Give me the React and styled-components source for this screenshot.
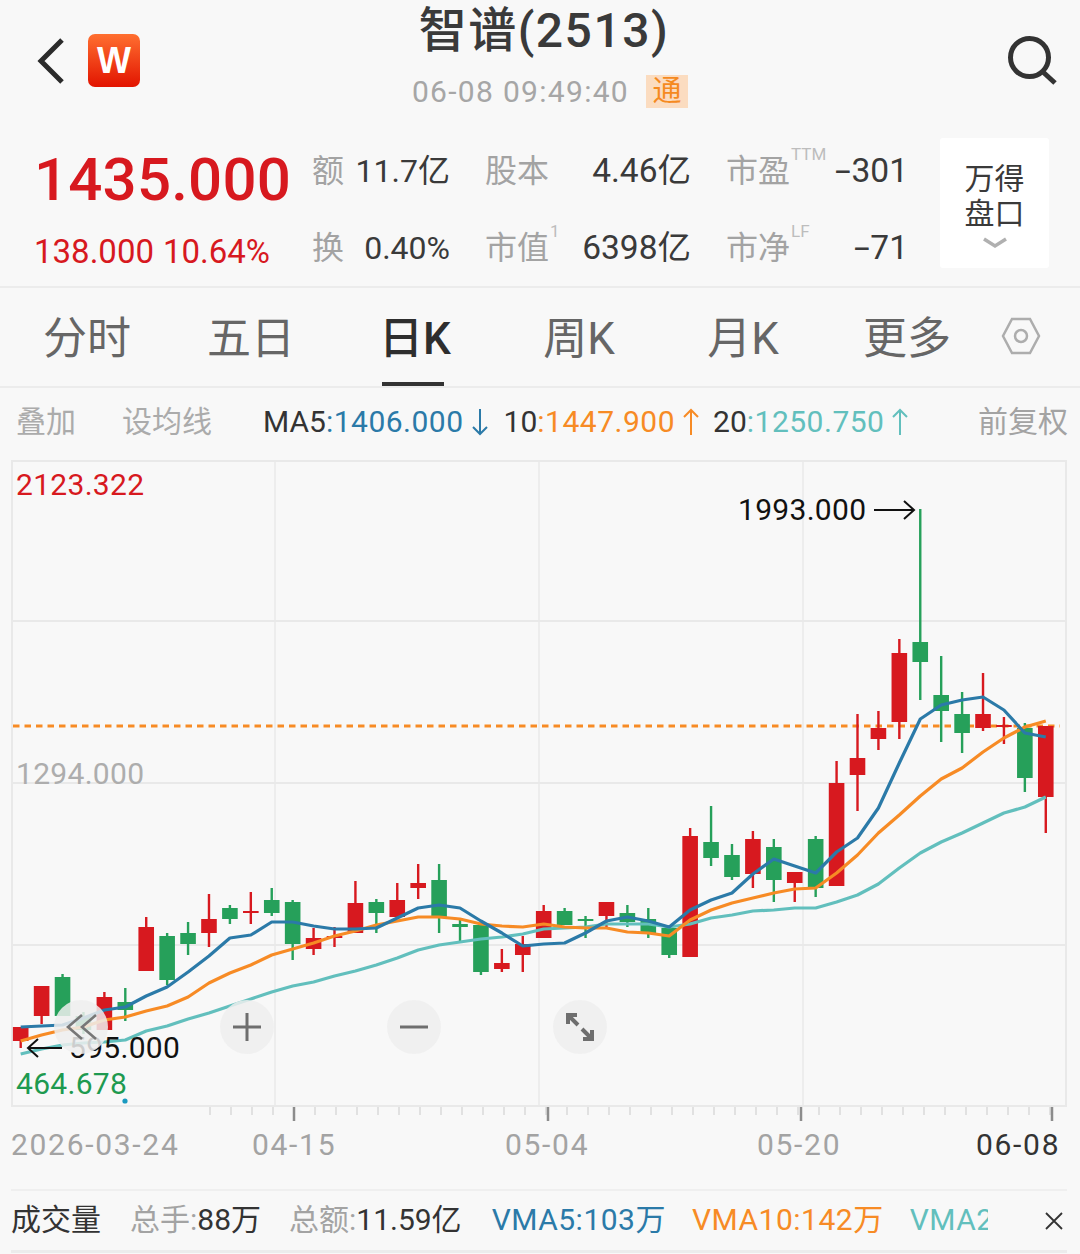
import React from "react";
import styled, { createGlobalStyle } from "styled-components";

const RED = "#d7191f";
const GREEN = "#26a05a";
const BLUE = "#2b7aa8";
const ORANGE = "#f78b25";
const TEAL = "#62bfbd";
const GRID = "#e9e9e9";

const FONT = `Roboto, "Noto Sans CJK SC", sans-serif`;

const GlobalStyle = createGlobalStyle`
  html, body {
    margin: 0;
    padding: 0;
    background: #f8f8f8;
  }
  body {
    font-family: ${FONT};
    overflow: hidden;
  }
`;

const Page = styled.div`
  width: 1080px;
  height: 1254px;
  overflow: hidden;
  background: #f8f8f8;
  color: #333;
`;

/* top bar */
const Header = styled.header`
  display: grid;
  grid-template-columns: 1fr auto 1fr;
  height: 138px;
`;

const HeaderLeft = styled.div`
  display: flex;
  align-items: flex-start;
  gap: 23px;
  padding: 34px 0 0 37px;
`;

const BackIcon = styled.svg`
  width: 28px;
  height: 53px;
`;

const Logo = styled.div`
  width: 52px;
  height: 53px;
  border-radius: 7px;
  background: linear-gradient(#ff6f30, #e21400);
  color: #fff;
  font: bold 36px/54px "Liberation Sans", sans-serif;
  text-align: center;
`;

const HeaderCenter = styled.div`
  display: flex;
  flex-direction: column;
  align-items: center;
  padding-left: 8px;
`;

const Title = styled.div`
  height: 60px;
  font-size: 48px;
  font-weight: 500;
  line-height: 61px;
  letter-spacing: 1.5px;
  color: #3a3a3a;
`;

const TimeRow = styled.div`
  display: flex;
  align-items: center;
  gap: 17px;
  height: 33px;
  margin-top: 15px;
  padding-left: 12px;
  font-size: 30px;
  letter-spacing: 1.3px;
  color: #a6a6a6;
`;

const Tag = styled.span`
  width: 42px;
  height: 33px;
  background: #fbdcc0;
  color: #f58a1f;
  font-size: 29px;
  line-height: 33px;
  letter-spacing: 0;
  text-align: center;
`;

const HeaderRight = styled.div`
  display: flex;
  justify-content: flex-end;
  padding: 34px 22px 0 0;
`;

const SearchIcon = styled.svg`
  width: 52px;
  height: 52px;
`;

/* quote block */
const QuoteRow = styled.section`
  display: flex;
  align-items: flex-start;
  height: 150px;
  box-sizing: border-box;
  padding-left: 35px;
  border-bottom: 2px solid #ececec;
`;

const PriceCol = styled.div`
  flex: 0 0 277px;
`;

const Price = styled.div`
  margin: 7px 0 0 -1px;
  font-size: 60px;
  font-weight: 500;
  line-height: 70px;
  letter-spacing: 0.2px;
  color: ${RED};
`;

const Change = styled.div`
  display: flex;
  gap: 9px;
  margin-top: 17px;
  margin-left: -1px;
  font-size: 33px;
  line-height: 40px;
  color: ${RED};
`;

const Stats = styled.div`
  display: grid;
  grid-template-columns: 138px 206px 182px;
  grid-auto-rows: 42px;
  column-gap: 35px;
  row-gap: 35px;
  padding-top: 12px;
`;

const Stat = styled.div`
  display: flex;
  justify-content: space-between;
  align-items: center;
  font-size: 32px;
  line-height: 42px;
  white-space: nowrap;
`;

const StatLabel = styled.span`
  display: flex;
  color: #a3a3a3;
`;

const Sup = styled.sup`
  margin: -4px 0 0 1px;
  font-size: 17px;
  line-height: 17px;
  color: #bdbdbd;
  vertical-align: top;
`;

const StatValue = styled.span`
  font-size: ${(p) => (p.$small ? 32 : 33.5)}px;
  color: #3a3a3a;
`;

const Dash = styled.span`
  display: inline-block;
  margin-right: 7px;
  transform: scaleX(1.7);
  transform-origin: left center;
`;

const DepthBox = styled.div`
  display: flex;
  flex-direction: column;
  align-items: center;
  width: 109px;
  height: 130px;
  margin-left: 32px;
  padding-top: 23px;
  box-sizing: border-box;
  background: #fff;
  border-radius: 3px;
  font-size: 30px;
  line-height: 35px;
  color: #3a3a3a;
  text-align: center;
`;

const DepthChevron = styled.svg`
  width: 26px;
  height: 12px;
  margin-top: 6px;
`;

/* period tabs */
const Tabs = styled.nav`
  display: flex;
  height: 100px;
  box-sizing: border-box;
  padding-left: 5px;
  border-bottom: 2px solid #ececec;
`;

const Tab = styled.div`
  display: flex;
  flex-direction: column;
  align-items: center;
  width: 164px;
`;

const TabText = styled.div`
  flex: 1;
  display: flex;
  align-items: center;
  font-size: 44px;
  font-weight: ${(p) => (p.$active ? 500 : 400)};
  color: ${(p) => (p.$active ? "#2e2e2e" : "#666")};
`;

const TabBar = styled.div`
  width: 62px;
  height: 4px;
  margin-right: 4px;
  background: ${(p) => (p.$active ? "#333" : "transparent")};
`;

const HexIcon = styled.svg`
  width: 40px;
  height: 38px;
  margin: 29px 0 0 12px;
`;

/* moving-average legend */
const MaRow = styled.div`
  display: flex;
  align-items: center;
  height: 72px;
  box-sizing: border-box;
  padding: 0 12px 5px 16px;
  font-size: 30px;
  white-space: nowrap;
`;

const MaTool = styled.span`
  margin-right: ${(p) => p.$gap}px;
  margin-bottom: 5px;
  color: #ababab;
`;

const MaKey = styled.span`
  color: #333;
`;

const MaValue = styled.span`
  letter-spacing: 0.5px;
  color: ${(p) => p.$color};
`;

const MaArrowIcon = styled.svg`
  width: 18px;
  height: 28px;
  margin: 0 ${(p) => p.$after}px 0 7px;
`;

const AdjustLabel = styled.span`
  margin-left: auto;
  margin-bottom: 5px;
  color: #a3a3a3;
`;

/* chart */
const ChartWrap = styled.div`
  position: relative;
  height: 662px;
`;

const ChartSvg = styled.svg`
  display: block;
  width: 1080px;
  height: 662px;
`;

const PriceTag = styled.span`
  position: absolute;
  left: ${(p) => p.$left}px;
  top: ${(p) => p.$top}px;
  font-size: 30px;
  line-height: 36px;
  letter-spacing: 0.3px;
  color: ${(p) => p.$color};
`;

const ZoomBar = styled.div`
  position: absolute;
  left: 54px;
  top: 540px;
  display: flex;
  gap: 112.4px;
`;

const ZoomButton = styled.div`
  display: flex;
  align-items: center;
  justify-content: center;
  width: 54px;
  height: 54px;
  border-radius: 50%;
  background: rgba(238, 238, 238, 0.85);
  svg {
    width: 34px;
    height: 34px;
  }
`;

/* date axis */
const DateAxis = styled.div`
  display: grid;
  grid-template-columns: 241px 253px 252px 219px auto;
  height: 46px;
  padding-left: 11px;
  font-size: 30px;
  line-height: 46px;
  letter-spacing: 1.7px;
  color: #a3a3a3;
`;

const DateCurrent = styled.span`
  color: #333;
`;

/* volume header */
const VolumeRow = styled.div`
  display: flex;
  align-items: baseline;
  height: 64px;
  box-sizing: border-box;
  margin: 21px 13px 0 11px;
  padding-top: 4px;
  border-top: 2px solid #efefef;
  border-bottom: 3px solid #ececec;
  font-size: 30px;
  white-space: nowrap;
`;

const VolumeTitle = styled.span`
  margin-right: 29px;
  color: #333;
`;

const VolumeStat = styled.span`
  margin-right: ${(p) => p.$gap}px;
  color: #333;
`;

const VolumeKey = styled.span`
  color: #a3a3a3;
`;

const VolumeMa = styled.span`
  margin-right: 26px;
  letter-spacing: 0.5px;
  color: ${(p) => p.$color};
`;

const VolumeClip = styled.span`
  width: 78px;
  overflow: hidden;
  letter-spacing: 0.5px;
  color: ${TEAL};
`;

const CloseIcon = styled.svg`
  align-self: center;
  width: 22px;
  height: 22px;
  margin: 0 2px 4px auto;
`;

// [up, wickTop, bodyTop, bodyBottom, wickBottom]
const CANDLES = [
  [1, 1027, 1027, 1041, 1048],
  [1, 986, 986, 1016, 1024],
  [0, 974, 977, 1016, 1016],
  [0, 1012, 1016, 1030, 1034],
  [1, 992, 997, 1030, 1030],
  [0, 988, 1002, 1010, 1021],
  [1, 917, 927, 971, 971],
  [0, 933, 936, 980, 985],
  [0, 922, 933, 944, 955],
  [1, 894, 919, 933, 947],
  [0, 905, 908, 919, 924],
  [1, 892, 911, 913, 924],
  [0, 888, 900, 913, 916],
  [0, 900, 902, 944, 960],
  [1, 928, 938, 949, 955],
  [1, 927, 936, 938, 947],
  [1, 881, 903, 933, 933],
  [0, 899, 902, 913, 933],
  [1, 883, 900, 917, 917],
  [1, 864, 883, 888, 899],
  [0, 864, 880, 918, 933],
  [0, 920, 924, 927, 943],
  [0, 925, 925, 972, 975],
  [1, 949, 963, 969, 972],
  [1, 936, 944, 955, 972],
  [1, 905, 911, 938, 938],
  [0, 908, 911, 925, 925],
  [0, 916, 919, 921, 938],
  [1, 902, 902, 916, 927],
  [0, 905, 913, 922, 927],
  [0, 908, 919, 933, 938],
  [0, 928, 928, 955, 958],
  [1, 828, 836, 957, 957],
  [0, 806, 842, 858, 866],
  [0, 844, 855, 877, 880],
  [1, 831, 839, 874, 888],
  [0, 839, 847, 880, 902],
  [1, 872, 872, 883, 902],
  [0, 836, 839, 888, 897],
  [1, 761, 783, 886, 886],
  [1, 714, 758, 775, 811],
  [1, 711, 728, 739, 750],
  [1, 639, 653, 722, 739],
  [0, 509, 642, 662, 700],
  [0, 656, 695, 711, 742],
  [0, 692, 714, 733, 753],
  [1, 673, 714, 728, 731],
  [1, 717, 725, 727, 744],
  [0, 723, 728, 778, 792],
  [1, 726, 726, 797, 833],
];

const MA5 = [1027, 1026, 1025, 1018, 1010, 1007, 996, 987, 972, 956, 938, 935, 922, 922, 926, 929, 929, 928, 918, 908, 905, 908, 921, 933, 946, 944, 943, 933, 921, 917, 921, 927, 910, 900, 893, 874, 859, 866, 873, 852, 838, 808, 763, 719, 705, 700, 697, 710, 733, 737];
const MA10 = [1041, 1035, 1030, 1027, 1020, 1017, 1011, 1006, 997, 983, 973, 965, 955, 949, 943, 936, 931, 925, 921, 917, 917, 919, 924, 926, 927, 924, 927, 928, 928, 932, 933, 936, 920, 910, 903, 898, 893, 889, 888, 873, 855, 833, 815, 796, 779, 768, 752, 738, 727, 721];
const MA20 = [1054, 1049, 1045, 1043, 1042, 1040, 1031, 1026, 1019, 1013, 1006, 999, 992, 986, 982, 976, 971, 965, 958, 950, 945, 942, 939, 937, 934, 929, 928, 927, 924, 924, 924, 927, 924, 918, 915, 911, 910, 908, 908, 902, 895, 884, 868, 853, 842, 833, 823, 813, 807, 797];

const candleX = (i) => 20.7 + i * 20.92;
const linePoints = (ys) => ys.map((y, i) => `${candleX(i).toFixed(1)},${y}`).join(" ");

const minorTicks = Array.from({ length: 41 }, (_, i) => 210 + i * 21);
const majorTicks = [294, 548, 801, 1052];

const Candle = ({ data, index }) => {
  const [up, wickTop, bodyTop, bodyBottom, wickBottom] = data;
  const x = candleX(index);
  const color = up ? RED : GREEN;
  return (
    <g fill={color}>
      <rect x={x - 1.2} y={wickTop} width={2.4} height={wickBottom - wickTop} />
      <rect x={x - 7.8} y={bodyTop} width={15.6} height={bodyBottom - bodyTop} />
    </g>
  );
};

const KChart = () => (
  <ChartSvg viewBox="0 460 1080 662">
    <g stroke={GRID} fill="none">
      <rect x="12" y="461" width="1054" height="645" strokeWidth="2" />
      <path d="M275 461V1106M539 461V1106M803 461V1106" strokeWidth="1.5" />
      <path d="M12 621H1066M12 783H1066M12 945H1066" strokeWidth="2" />
    </g>
    <path d="M13 726H1060" stroke={ORANGE} strokeWidth="2.8" strokeDasharray="6.5 5" />
    {CANDLES.map((c, i) => (
      <Candle key={i} data={c} index={i} />
    ))}
    <g fill="none" strokeWidth="3.2" strokeLinejoin="round">
      <polyline points={linePoints(MA20)} stroke={TEAL} />
      <polyline points={linePoints(MA10)} stroke={ORANGE} />
      <polyline points={linePoints(MA5)} stroke={BLUE} />
    </g>
    <g stroke="#111" strokeWidth="2" fill="none">
      <path d="M874 510H914M904 501L914 510L904 519" />
      <path d="M28 1048H62M38 1039L28 1048L38 1057" />
    </g>
    <circle cx="125" cy="1101" r="2.6" fill="#1a9ac0" />
    <g stroke="#d2d2d2" strokeWidth="1.2">
      {minorTicks.map((x) => (
        <path key={x} d={`M${x} 1107V1115`} />
      ))}
    </g>
    <g stroke="#8c8c8c" strokeWidth="2.5">
      {majorTicks.map((x) => (
        <path key={x} d={`M${x} 1107V1121`} />
      ))}
    </g>
  </ChartSvg>
);

const MaArrow = ({ dir, color, after }) => (
  <MaArrowIcon viewBox="0 0 18 28" $after={after} fill="none" stroke={color} strokeWidth="2">
    {dir === "up" ? <path d="M9 27V2M2 9L9 2L16 9" /> : <path d="M9 1V26M2 19L9 26L16 19" />}
  </MaArrowIcon>
);

export default function App() {
  return (
    <Page>
      <GlobalStyle />
      <Header>
        <HeaderLeft>
          <BackIcon viewBox="0 0 28 53" fill="none" stroke="#2b2b2b" strokeWidth="5">
            <path d="M25 6L4 27L25 48" />
          </BackIcon>
          <Logo>W</Logo>
        </HeaderLeft>
        <HeaderCenter>
          <Title>智谱(2513)</Title>
          <TimeRow>
            <span>06-08 09:49:40</span>
            <Tag>通</Tag>
          </TimeRow>
        </HeaderCenter>
        <HeaderRight>
          <SearchIcon viewBox="0 0 52 52" fill="none" stroke="#333" strokeWidth="5">
            <circle cx="23.5" cy="23.5" r="19" />
            <path d="M37 38L49 49" />
          </SearchIcon>
        </HeaderRight>
      </Header>

      <QuoteRow>
        <PriceCol>
          <Price>1435.000</Price>
          <Change>
            <span>138.000</span>
            <span>10.64%</span>
          </Change>
        </PriceCol>
        <Stats>
          <Stat>
            <StatLabel>额</StatLabel>
            <StatValue $small>11.7亿</StatValue>
          </Stat>
          <Stat>
            <StatLabel>股本</StatLabel>
            <StatValue>4.46亿</StatValue>
          </Stat>
          <Stat>
            <StatLabel>
              市盈<Sup>TTM</Sup>
            </StatLabel>
            <StatValue>
              <Dash>-</Dash>301
            </StatValue>
          </Stat>
          <Stat>
            <StatLabel>换</StatLabel>
            <StatValue $small>0.40%</StatValue>
          </Stat>
          <Stat>
            <StatLabel>
              市值<Sup>1</Sup>
            </StatLabel>
            <StatValue>6398亿</StatValue>
          </Stat>
          <Stat>
            <StatLabel>
              市净<Sup>LF</Sup>
            </StatLabel>
            <StatValue>
              <Dash>-</Dash>71
            </StatValue>
          </Stat>
        </Stats>
        <DepthBox>
          万得
          <br />
          盘口
          <DepthChevron viewBox="0 0 26 12" fill="none" stroke="#b0b0b0" strokeWidth="3.5">
            <path d="M2 2L13 9L24 2" />
          </DepthChevron>
        </DepthBox>
      </QuoteRow>

      <Tabs>
        {["分时", "五日", "日K", "周K", "月K", "更多"].map((label) => {
          const active = label === "日K";
          return (
            <Tab key={label}>
              <TabText $active={active}>{label}</TabText>
              <TabBar $active={active} />
            </Tab>
          );
        })}
        <HexIcon viewBox="0 0 40 38" fill="none" stroke="#adadad" strokeWidth="2.5">
          <path d="M11 2H29L38 19L29 36H11L2 19Z" />
          <circle cx="20" cy="19" r="6" />
        </HexIcon>
      </Tabs>

      <MaRow>
        <MaTool $gap={46}>叠加</MaTool>
        <MaTool $gap={51}>设均线</MaTool>
        <MaKey>MA5</MaKey>
        <MaValue $color={BLUE}>:1406.000</MaValue>
        <MaArrow dir="down" color={BLUE} after={15} />
        <MaKey>10</MaKey>
        <MaValue $color={ORANGE}>:1447.900</MaValue>
        <MaArrow dir="up" color={ORANGE} after={13} />
        <MaKey>20</MaKey>
        <MaValue $color={TEAL}>:1250.750</MaValue>
        <MaArrow dir="up" color={TEAL} after={0} />
        <AdjustLabel>前复权</AdjustLabel>
      </MaRow>

      <ChartWrap>
        <KChart />
        <PriceTag $left={16} $top={7} $color={RED}>2123.322</PriceTag>
        <PriceTag $left={16} $top={296} $color="#adadad">1294.000</PriceTag>
        <PriceTag $left={16} $top={606} $color="#1e9a50">464.678</PriceTag>
        <PriceTag $left={738} $top={32} $color="#111">1993.000</PriceTag>
        <PriceTag $left={69} $top={570} $color="#111">595.000</PriceTag>
        <ZoomBar>
          <ZoomButton>
            <svg viewBox="0 0 34 34" fill="none" stroke="#777" strokeWidth="2.6">
              <path d="M18 5L4 17L18 29M32 5L18 17L32 29" />
            </svg>
          </ZoomButton>
          <ZoomButton>
            <svg viewBox="0 0 34 34" fill="none" stroke="#6e6e6e" strokeWidth="3">
              <path d="M17 3V31M3 17H31" />
            </svg>
          </ZoomButton>
          <ZoomButton>
            <svg viewBox="0 0 34 34" fill="none" stroke="#6e6e6e" strokeWidth="3">
              <path d="M3 17H31" />
            </svg>
          </ZoomButton>
          <ZoomButton>
            <svg viewBox="0 0 34 34" fill="none" stroke="#6e6e6e" strokeWidth="4">
              <path d="M5 5L15 15M5 14V5H14M29 29L19 19M29 20V29H20" />
            </svg>
          </ZoomButton>
        </ZoomBar>
      </ChartWrap>

      <DateAxis>
        <span>2026-03-24</span>
        <span>04-15</span>
        <span>05-04</span>
        <span>05-20</span>
        <DateCurrent>06-08</DateCurrent>
      </DateAxis>

      <VolumeRow>
        <VolumeTitle>成交量</VolumeTitle>
        <VolumeStat $gap={28}>
          <VolumeKey>总手:</VolumeKey>88万
        </VolumeStat>
        <VolumeStat $gap={30}>
          <VolumeKey>总额:</VolumeKey>11.59亿
        </VolumeStat>
        <VolumeMa $color={BLUE}>VMA5:103万</VolumeMa>
        <VolumeMa $color={ORANGE}>VMA10:142万</VolumeMa>
        <VolumeClip>VMA20</VolumeClip>
        <CloseIcon viewBox="0 0 22 22" fill="none" stroke="#333" strokeWidth="1.8">
          <path d="M3 3L19 19M19 3L3 19" />
        </CloseIcon>
      </VolumeRow>
    </Page>
  );
}
